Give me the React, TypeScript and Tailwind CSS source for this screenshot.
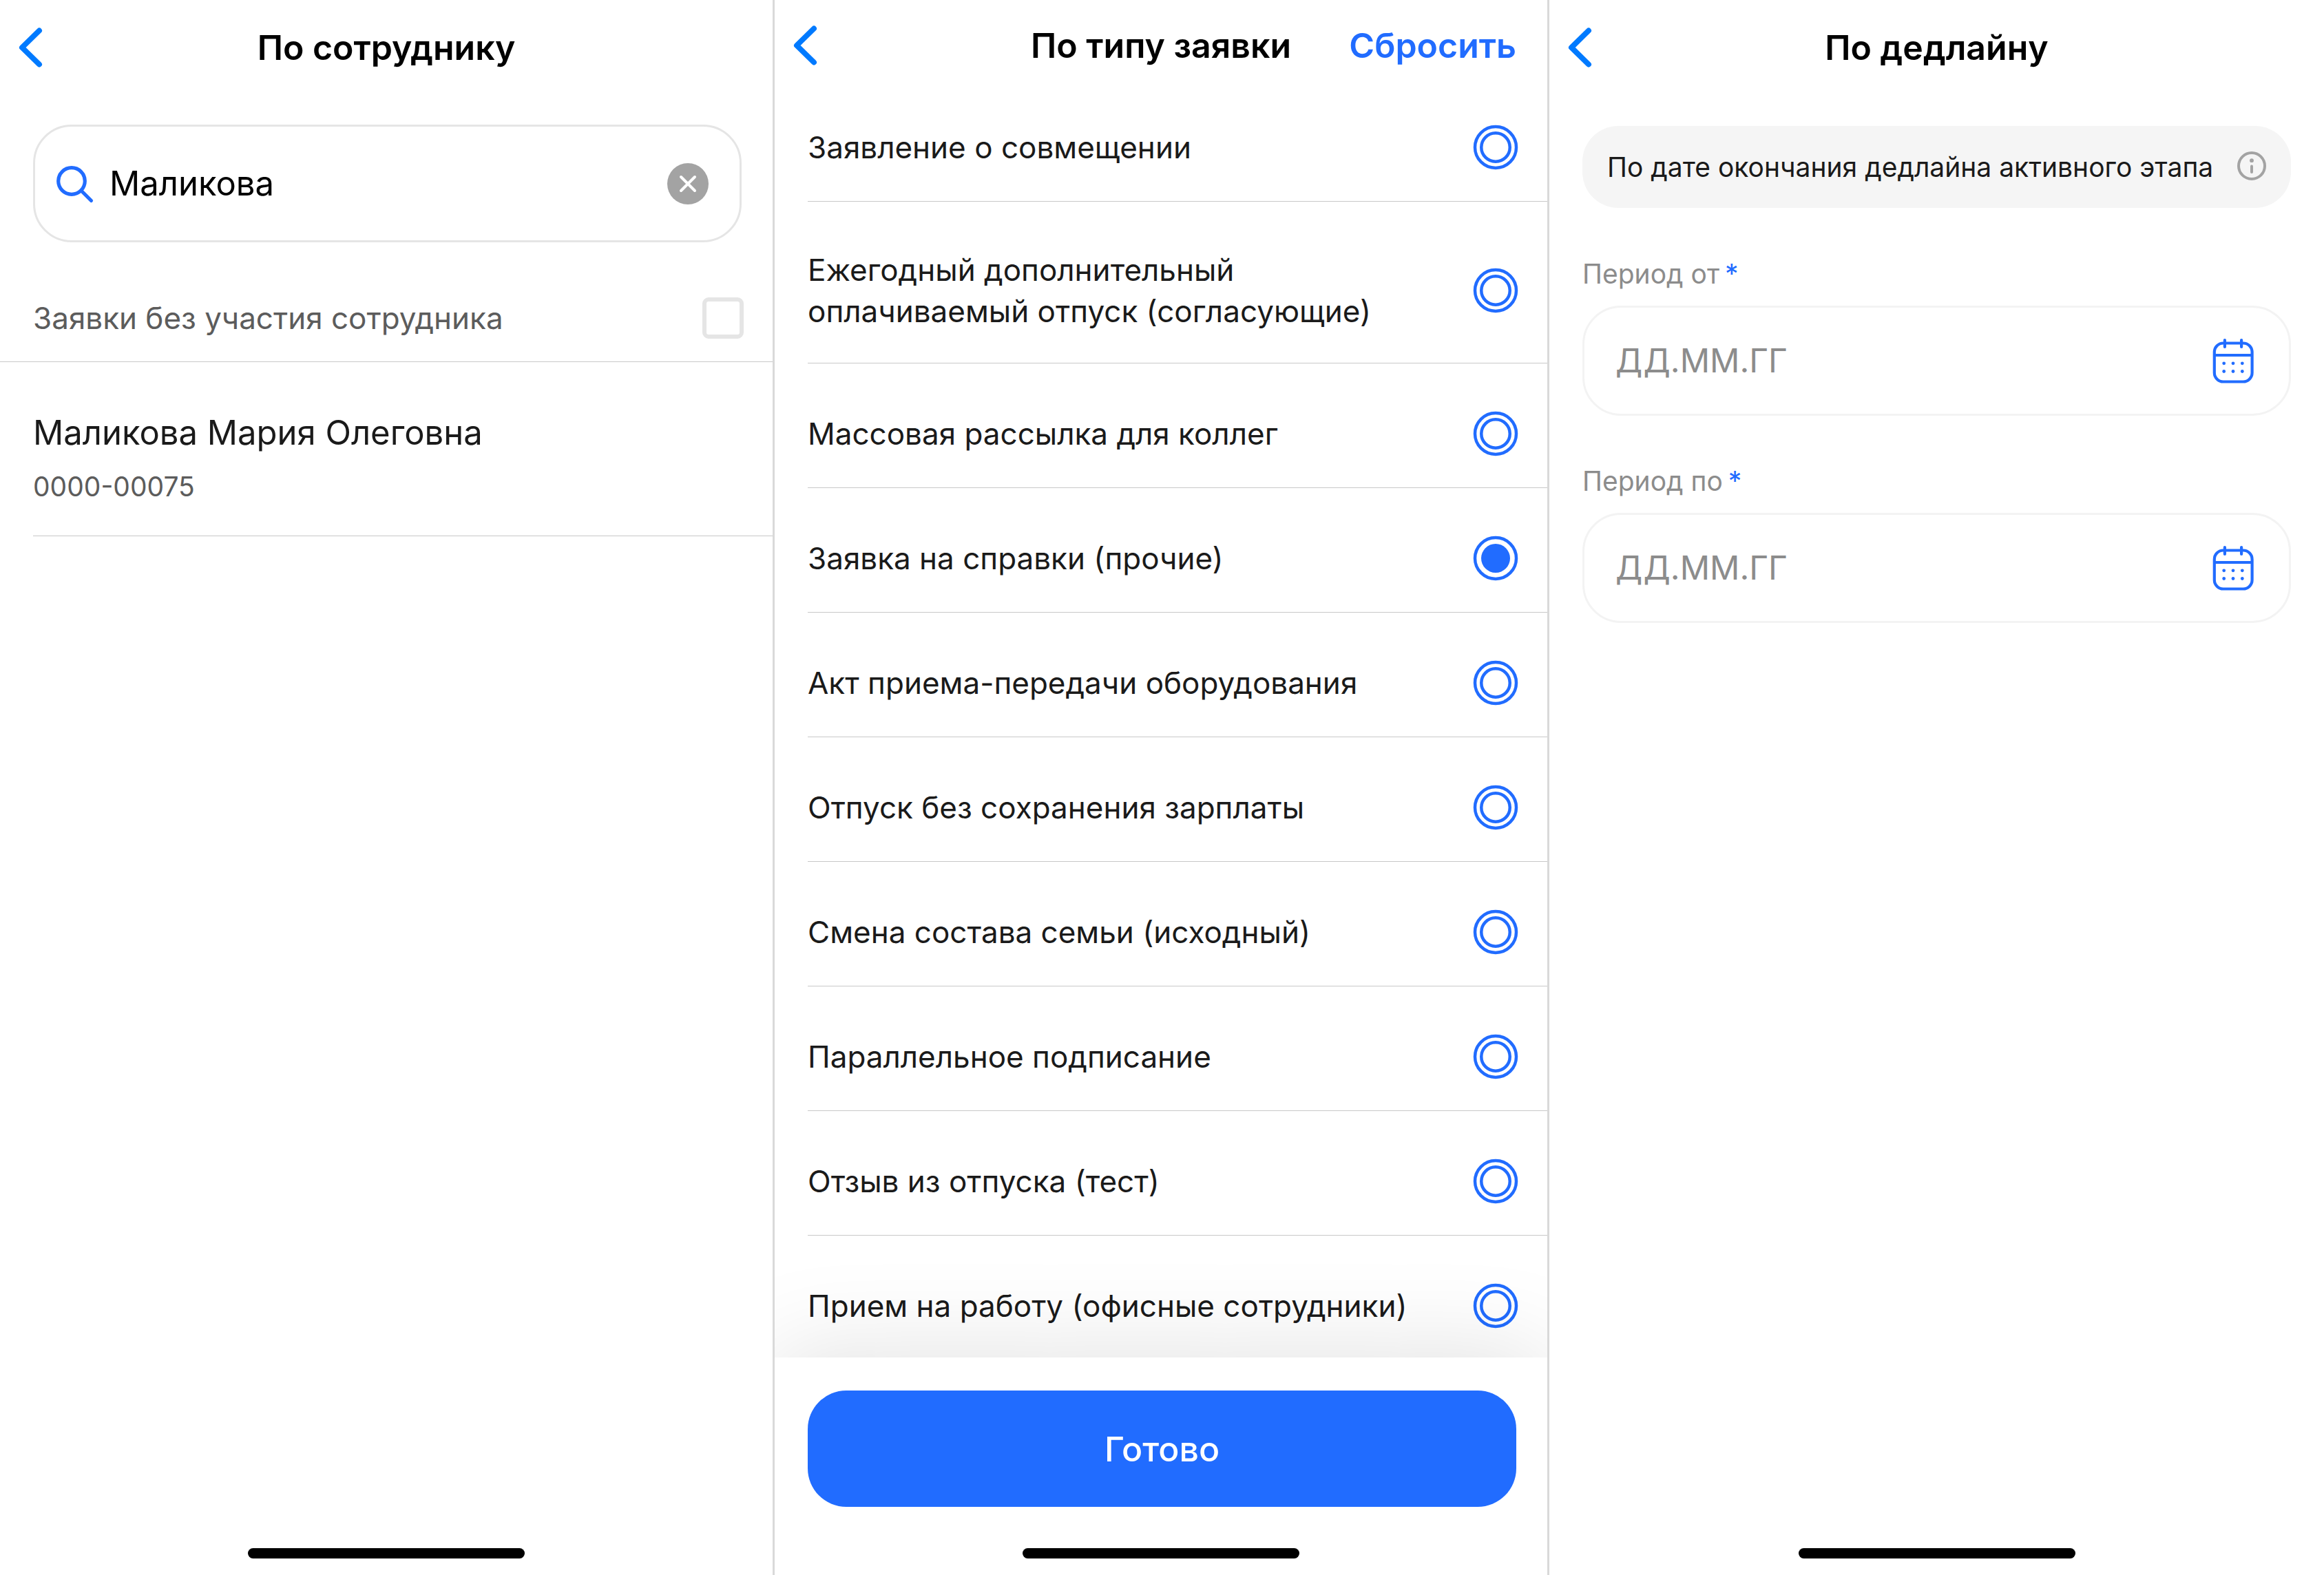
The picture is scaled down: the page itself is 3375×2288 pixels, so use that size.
import { useState } from "react";

const requestTypes = [
  "Заявление о совмещении",
  "Ежегодный дополнительный оплачиваемый отпуск (согласующие)",
  "Массовая рассылка для коллег",
  "Заявка на справки (прочие)",
  "Акт приема-передачи оборудования",
  "Отпуск без сохранения зарплаты",
  "Смена состава семьи (исходный)",
  "Параллельное подписание",
  "Отзыв из отпуска (тест)",
  "Прием на работу (офисные сотрудники)",
];

function BackButton() {
  return (
    <button type="button" aria-label="Назад" className="ml-6 flex h-16 w-11 items-center">
      <svg viewBox="0 0 44 64" className="h-16 w-11" fill="none" stroke="#007aff" strokeWidth="8" strokeLinecap="round" strokeLinejoin="round">
        <path d="M33 7.500 L8 32 L33 56.500" />
      </svg>
    </button>
  );
}

function Header({ title, action }: { title: string; action?: string }) {
  return (
    <header className="grid h-[132px] shrink-0 grid-cols-[1fr_auto_1fr] items-center">
      <BackButton />
      <h1 className="text-[50px] font-semibold leading-[60px] text-black">{title}</h1>
      {action && (
        <button type="button" className="mr-[45px] justify-self-end text-[50px] font-semibold leading-[60px] text-[#216cff]">
          {action}
        </button>
      )}
    </header>
  );
}

function HomeIndicator() {
  return <div className="mx-auto mb-6 h-[15px] w-[402px] shrink-0 rounded-full bg-black" />;
}

function EmployeeScreen() {
  const [query, setQuery] = useState("Маликова");
  return (
    <section className="flex flex-col border-r-3 border-[#d9d9d9] pt-[3px]">
      <Header title="По сотруднику" />
      <div className="ml-12 mr-[45px] mt-[46px] flex h-[171px] items-center rounded-[56px] border-3 border-[#e5e5e5] pl-[30px] pr-[45px]">
        <svg viewBox="0 0 60 60" className="size-[60px] shrink-0" fill="none" stroke="#216cff" strokeWidth="5.200" strokeLinecap="round">
          <circle cx="23" cy="26" r="19.300" />
          <path d="M37 40 L51.500 54.500" />
        </svg>
        <input
          aria-label="Поиск сотрудника"
          value={query}
          onChange={(e) => setQuery(e.target.value)}
          className="ml-[18px] min-w-0 flex-1 text-[49px] leading-[66px] text-black outline-none"
        />
        <button type="button" aria-label="Очистить" onClick={() => setQuery("")}>
          <svg viewBox="0 0 60 60" className="size-[60px]" fill="none" stroke="white" strokeWidth="4" strokeLinecap="round">
            <circle cx="30" cy="30" r="30" fill="#a3a3a3" stroke="none" />
            <path d="M20 20 L40 40 M40 20 L20 40" />
          </svg>
        </button>
      </div>
      <label className="mt-12 flex h-[126px] items-center justify-between border-b border-[#c8c8c8] pb-0.5 pl-12 pr-[42px] text-[44px] leading-[60px] text-[#5c5c5c]">
        Заявки без участия сотрудника
        <input type="checkbox" className="size-[60px] appearance-none rounded-[9px] border-6 border-[#e5e5e5] checked:bg-[#216cff]" />
      </label>
      <button type="button" className="ml-12 border-b border-[#c8c8c8] pb-[42px] pt-[70px] text-left">
        <div className="text-[49px] leading-[66px] text-[#1a1a1a]">Маликова Мария Олеговна</div>
        <div className="mt-4 text-[39px] leading-[58px] text-[#5c5c5c]">0000-00075</div>
      </button>
      <div className="flex-1" />
      <HomeIndicator />
    </section>
  );
}

function RequestTypeScreen() {
  const [selected, setSelected] = useState(3);
  return (
    <section className="flex flex-col overflow-hidden border-r-3 border-[#d9d9d9]">
      <Header title="По типу заявки" action="Сбросить" />
      <div className="min-h-0 grow basis-0 overflow-hidden pl-12">
        {requestTypes.map((name, i) => (
          <label
            key={name}
            className="flex items-center gap-6 border-b border-[#c8c8c8] pb-[45px] pr-[42px] pt-[69px] text-[#1a1a1a] first:pt-[49px]"
          >
            <span className="flex-1 pr-12 text-[44px] leading-[60px]">{name}</span>
            <span className="relative size-[66px] shrink-0">
              <input
                type="radio"
                name="request-type"
                checked={selected === i}
                onChange={() => setSelected(i)}
                className="absolute inset-0 size-full appearance-none rounded-full"
              />
              <svg viewBox="0 0 66 66" className="pointer-events-none absolute inset-0 size-full" fill="none" stroke="#216cff" strokeWidth="4.500">
                <circle cx="33" cy="33" r="30" />
                {selected === i ? <circle cx="33" cy="33" r="21" fill="#216cff" stroke="none" /> : <circle cx="33" cy="33" r="20.750" />}
              </svg>
            </span>
          </label>
        ))}
      </div>
      <footer className="relative flex shrink-0 flex-col bg-white pt-12 shadow-[0_0_150px_rgba(0,0,0,0.13)]">
        <button type="button" className="mb-[60px] ml-12 mr-[45px] h-[169px] rounded-[56px] bg-[#216cff] text-[50px] font-medium leading-[60px] text-white">
          Готово
        </button>
        <HomeIndicator />
      </footer>
    </section>
  );
}

function DateField({ id, label }: { id: string; label: string }) {
  return (
    <div className="flex flex-col">
      <label htmlFor={id} className="flex gap-2 text-[39px] leading-[54px] text-[#8c8c8c]">
        {label}
        <span className="text-[#216cff]">*</span>
      </label>
      <div className="mt-[19px] flex h-40 items-center rounded-[56px] border-3 border-[#f3f3f3] pl-[45px] pr-12">
        <input
          id={id}
          placeholder="ДД.ММ.ГГ"
          className="min-w-0 flex-1 text-[48px] leading-[60px] text-[#1a1a1a] outline-none placeholder:text-[#8c8c8c]"
        />
        <button type="button" aria-label="Открыть календарь">
          <svg viewBox="0 0 66 66" className="size-[66px]" fill="none" stroke="#216cff" strokeWidth="4.200" strokeLinecap="round">
            <rect x="5.800" y="7.500" width="54.800" height="56" rx="13" />
            <path d="M6 25 H60 M20.900 3 V13 M45.100 3 V13" />
            <g fill="#216cff" stroke="none">
              <circle cx="19.700" cy="36.800" r="2.400" />
              <circle cx="33" cy="36.800" r="2.400" />
              <circle cx="46.300" cy="36.800" r="2.400" />
              <circle cx="19.700" cy="48.500" r="2.400" />
              <circle cx="33" cy="48.500" r="2.400" />
              <circle cx="46.300" cy="48.500" r="2.400" />
            </g>
          </svg>
        </button>
      </div>
    </div>
  );
}

function DeadlineScreen() {
  return (
    <section className="flex flex-col pt-[3px]">
      <Header title="По дедлайну" />
      <div className="mx-12 mt-12 flex h-[119px] items-center justify-between rounded-[52px] bg-[#f5f5f5] pl-9 pr-9">
        <span className="text-[39px] leading-[54px] text-[#1a1a1a]">По дате окончания дедлайна активного этапа</span>
        <button type="button" aria-label="Подробнее" className="mb-1">
          <svg viewBox="0 0 42 42" className="size-[42px]" fill="none" stroke="#a3a3a3" strokeWidth="4" strokeLinecap="round">
            <circle cx="21" cy="21" r="19" />
            <path d="M21 21.500 V30" />
            <circle cx="21" cy="13.200" r="2.900" fill="#a3a3a3" stroke="none" />
          </svg>
        </button>
      </div>
      <div className="mx-12 mt-[69px] flex flex-col gap-[68px]">
        <DateField id="date-from" label="Период от" />
        <DateField id="date-to" label="Период по" />
      </div>
      <div className="flex-1" />
      <HomeIndicator />
    </section>
  );
}

export default function App() {
  return (
    <main className="grid min-h-screen grid-cols-3 bg-white font-['Inter',sans-serif]">
      <EmployeeScreen />
      <RequestTypeScreen />
      <DeadlineScreen />
    </main>
  );
}
